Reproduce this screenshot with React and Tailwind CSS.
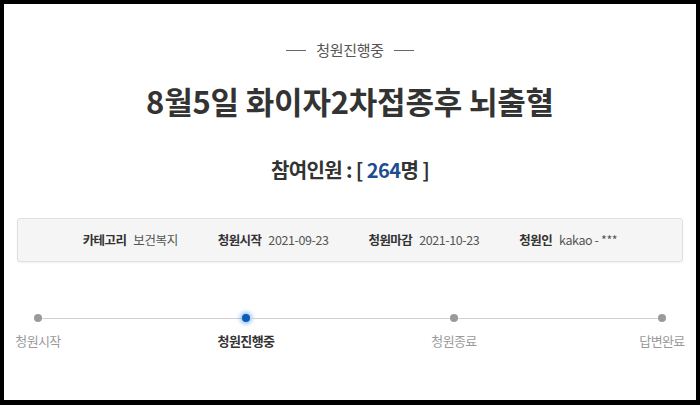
export default function App() {
	const font = { fontFamily: '"Noto Sans CJK KR", "Noto Sans", sans-serif' };
	const steps = [
		{ label: "청원시작", active: false },
		{ label: "청원진행중", active: true },
		{ label: "청원종료", active: false },
		{ label: "답변완료", active: false },
	];
	const info = [
		["카테고리", "보건복지"],
		["청원시작", "2021-09-23"],
		["청원마감", "2021-10-23"],
		["청원인", "kakao - ***"],
	];

	return (
		<div className="w-[700px] h-[405px] bg-white border-4 border-b-[5px] border-black flex flex-col overflow-hidden" style={font}>
			<div className="flex items-center justify-center gap-[10px] pt-[36px] text-[15px] leading-[20px] text-[#555]">
				<span className="w-[20px] h-px bg-[#666]"></span>
				<span className="tracking-[-0.3px]">청원진행중</span>
				<span className="w-[20px] h-px bg-[#666]"></span>
			</div>

			<h1 className="mt-[21px] text-center text-[31px] leading-[40px] font-bold text-[#333] tracking-[-0.2px]">
				8월5일 화이자2차접종후 뇌출혈
			</h1>

			<p className="mt-[35px] text-center text-[20px] leading-[28px] font-bold text-[#333] tracking-[-0.6px]">
				참여인원 : [ <span className="text-[#1d4e8f]">264</span>명 ]
			</p>

			<div className="mt-[34px] mx-[13px] h-[44px] bg-[#f5f5f5] border border-[#e0e0e0] rounded-[3px] shadow-[0_1px_2px_rgba(0,0,0,0.06)] flex items-center justify-center gap-[40px] text-[12.5px] leading-[16px]">
				{info.map(([k, v]) => (
					<div key={k} className="flex items-center gap-[7px]">
						<span className="font-bold text-[#333] tracking-[-0.6px]">{k}</span>
						<span className="text-[#555] tracking-[-0.4px]">{v}</span>
					</div>
				))}
			</div>

			<div className="mt-[52px] px-[30px] flex items-center h-[8px]">
				{steps.map((s, i) => (
					<div key={s.label} className={i < steps.length - 1 ? "flex items-center flex-1" : "flex items-center"}>
						{s.active ? (
							<span className="w-[8px] h-[8px] rounded-full bg-[#0b5cb8] shadow-[0_0_4px_2px_rgba(60,140,230,0.55)]"></span>
						) : (
							<span className="w-[8px] h-[8px] rounded-full bg-[#9a9a9a]"></span>
						)}
						{i < steps.length - 1 && <span className="flex-1 h-px bg-[#d0d0d0]"></span>}
					</div>
				))}
			</div>

			<div className="mt-[10px] px-[10px] flex justify-between text-[13px] leading-[18px]">
				{steps.map((s) => (
					<div key={s.label} className="w-[48px] flex justify-center">
						<span className={s.active ? "whitespace-nowrap font-bold text-[#333] tracking-[-0.6px]" : "whitespace-nowrap text-[#9a9a9a] tracking-[-0.6px]"}>
							{s.label}
						</span>
					</div>
				))}
			</div>
		</div>
	);
}
